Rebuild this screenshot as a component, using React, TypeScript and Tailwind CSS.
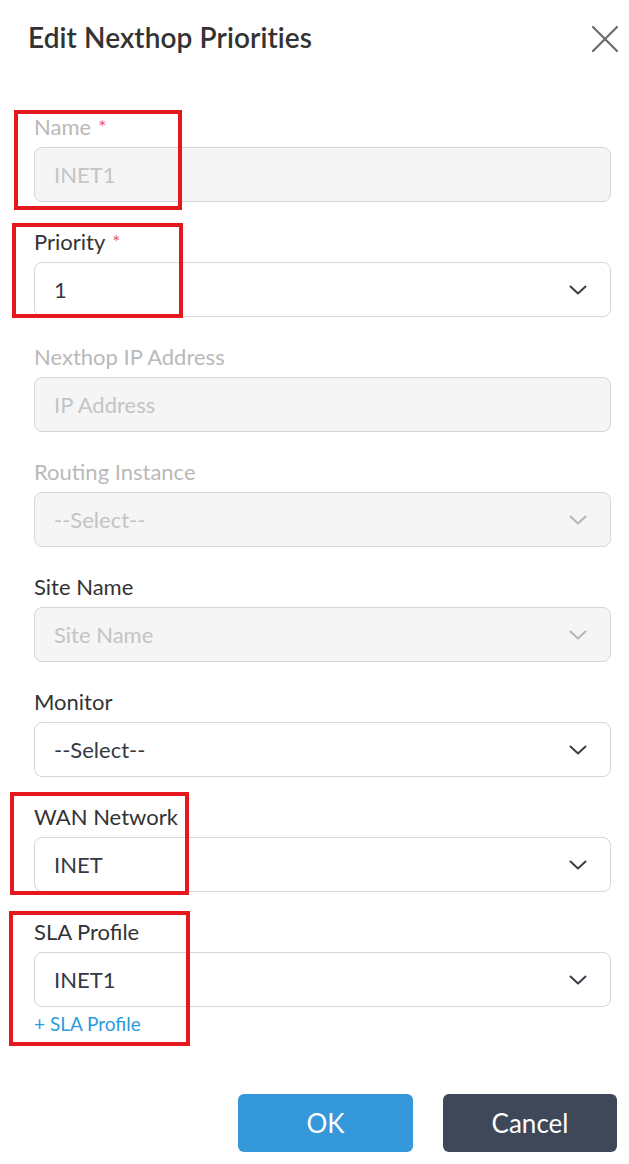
import React from "react";

type Field = {
  label: string;
  value: string;
  required?: boolean;
  labelMuted?: boolean;
  disabled?: boolean;
  select?: boolean;
  mark?: string;
  link?: string;
};

const fields: Field[] = [
  { label: "Name", value: "INET1", required: true, labelMuted: true, disabled: true, mark: "left-[-20px] top-[-5px] w-[168px] h-[100px]" },
  { label: "Priority", value: "1", required: true, select: true, mark: "left-[-22px] top-[-7px] w-[171px] h-[95px]" },
  { label: "Nexthop IP Address", value: "IP Address", labelMuted: true, disabled: true },
  { label: "Routing Instance", value: "--Select--", labelMuted: true, disabled: true, select: true },
  { label: "Site Name", value: "Site Name", disabled: true, select: true },
  { label: "Monitor", value: "--Select--", select: true },
  { label: "WAN Network", value: "INET", select: true, mark: "left-[-24px] top-[-13px] w-[179px] h-[103px]" },
  { label: "SLA Profile", value: "INET1", select: true, link: "+ SLA Profile", mark: "left-[-25px] top-[-9px] w-[181px] h-[135px]" },
];

const Chevron = ({ muted }: { muted?: boolean }) => (
  <svg width="18" height="10" viewBox="0 0 18 10" fill="none" className="shrink-0">
    <path d="M1.5 1.5 L9 8.5 L16.5 1.5" stroke={muted ? "#b5b5b5" : "#3a3f47"} strokeWidth="2" strokeLinecap="round" strokeLinejoin="round" />
  </svg>
);

const FormField = ({ f }: { f: Field }) => (
  <div className="relative">
    <div className={`text-[22px] leading-[24px] ${f.labelMuted ? "text-[#b9b9b9]" : "text-[#333333]"}`}>
      {f.label}
      {f.required && <span className="ml-[7px] text-[19px] align-top text-[#ec5a62]">*</span>}
    </div>
    <div
      className={`mt-[8px] h-[55px] rounded-[8px] border border-[#d6d6d6] flex items-center justify-between pl-[19px] pr-[23px] text-[22px] ${
        f.disabled ? "bg-[#f5f5f5] text-[#c4c4c4]" : "bg-white text-[#343a44]"
      }`}
    >
      <span>{f.value}</span>
      {f.select && <Chevron muted={f.disabled} />}
    </div>
    {f.link && <div className="mt-[6px] text-[19px] leading-[22px] text-[#2b9be0]">{f.link}</div>}
    {f.mark && <div className={`absolute border-[4px] border-[#e5171f] ${f.mark}`} />}
  </div>
);

export default function App() {
  return (
    <div className="w-[629px] h-[1164px] bg-white font-['Lato','Liberation_Sans',sans-serif] overflow-hidden">
      <div className="flex items-start justify-between pl-[28px] pr-[10px] pt-[21px]">
        <h1 className="text-[28px] leading-[32px] font-semibold text-[#333333] tracking-[0.1px]">Edit Nexthop Priorities</h1>
        <svg width="28" height="28" viewBox="0 0 28 28" className="mt-[4px]">
          <path d="M2 2 L26 26 M26 2 L2 26" stroke="#6b6b6b" strokeWidth="2.2" strokeLinecap="round" />
        </svg>
      </div>
      <div className="pl-[34px] pr-[18px] pt-[62px] flex flex-col gap-[28px]">
        {fields.map((f) => (
          <FormField key={f.label} f={f} />
        ))}
      </div>
      <div className="flex justify-end gap-[30px] pr-[12px] mt-[59px]">
        <button className="w-[175px] h-[58px] rounded-[6px] bg-[#3598db] text-white text-[26px]">OK</button>
        <button className="w-[174px] h-[58px] rounded-[6px] bg-[#3e4858] text-white text-[26px]">Cancel</button>
      </div>
    </div>
  );
}
